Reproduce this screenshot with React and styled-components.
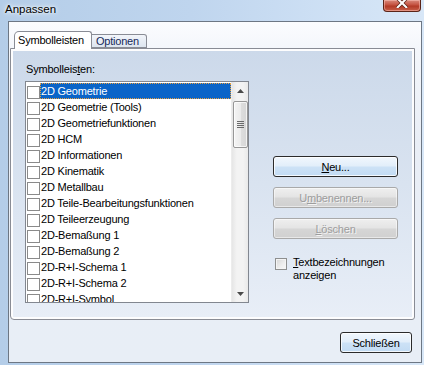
import React from 'react';
import styled, { createGlobalStyle } from 'styled-components';

const Global = createGlobalStyle`
  html, body { margin: 0; padding: 0; }
  body { font-family: "Liberation Sans", Arial, sans-serif; }
  * { box-sizing: border-box; }
`;

const items = [
  '2D Geometrie',
  '2D Geometrie (Tools)',
  '2D Geometriefunktionen',
  '2D HCM',
  '2D Informationen',
  '2D Kinematik',
  '2D Metallbau',
  '2D Teile-Bearbeitungsfunktionen',
  '2D Teileerzeugung',
  '2D-Bemaßung 1',
  '2D-Bemaßung 2',
  '2D-R+I-Schema 1',
  '2D-R+I-Schema 2',
  '2D-R+I-Symbol',
];

const Window = styled.div`
  width: 424px;
  height: 365px;
  display: flex;
  flex-direction: column;
  overflow: hidden;
  background: linear-gradient(90deg, #b4cde8 0%, #bfd5ee 45%, #cfe1f5 80%, #d8e7f7 100%);
  font-family: "Liberation Sans", Arial, sans-serif;
`;

const TitleBar = styled.div`
  height: 21px;
  display: flex;
  justify-content: space-between;
  align-items: flex-start;
  padding: 0 3px 0 5px;
`;

const Title = styled.div`
  font-size: 11.5px;
  line-height: 13px;
  margin-top: 3px;
  color: #000;
  text-shadow: 0 0 6px #fff, 0 0 3px #fff;
`;

const CloseButton = styled.div`
  width: 38px;
  height: 12px;
  border: 1px solid #5b2418;
  border-top: none;
  border-radius: 0 0 4px 4px;
  background: linear-gradient(#d98a7c, #c4513f 45%, #b23a26 55%, #c8604a);
  box-shadow: inset 0 0 0 1px rgba(255, 200, 190, 0.5);
  display: flex;
  justify-content: center;
  align-items: flex-start;
`;

const Body = styled.div`
  flex: 1;
  display: flex;
  padding: 0 2px 2px 8px;
`;

const Client = styled.div`
  flex: 1;
  display: flex;
  flex-direction: column;
  border: 1px solid #6d7784;
  background: linear-gradient(#fbfcfe 0, #f3f6fb 30px, #e9eef6 120px, #e8eef6 100%);
`;

const TabControl = styled.div`
  margin: 9px 6px 0 1px;
  display: flex;
  flex-direction: column;
`;

const TabStrip = styled.div`
  display: flex;
  align-items: flex-end;
  padding-left: 4px;
  height: 17px;
  position: relative;
  z-index: 1;
`;

const Tab = styled.div`
  font-size: 11px;
  letter-spacing: -0.2px;
  line-height: 13px;
  color: ${p => (p.$active ? '#000' : '#15295a')};
  border: 1px solid #898c95;
  border-bottom: ${p => (p.$active ? 'none' : '1px solid #898c95')};
  border-left: ${p => (p.$first ? '1px solid #898c95' : 'none')};
  border-radius: ${p => (p.$active ? '5px 3px 0 0' : '0 3px 0 0')};
  height: ${p => (p.$active ? '18px' : '14px')};
  margin-bottom: ${p => (p.$active ? '-1px' : '0')};
  padding: ${p => (p.$active ? '2px 7px 0 3px' : '0 7px 0 4px')};
  background: ${p => (p.$active ? '#fff' : 'linear-gradient(#f2f5fa, #dde5ef)')};
`;

const Panel = styled.div`
  height: 272px;
  border: 1px solid #898c95;
  border-radius: 0 0 3px 4px;
  background: #fdfdfe;
  padding: 2px;
  display: flex;
`;

const PanelInner = styled.div`
  flex: 1;
  display: flex;
  padding: 12px 0 0 12px;
  background: linear-gradient(#ccd9ea 0%, #d9e3f0 50%, #e8eef7 100%);
`;

const LeftCol = styled.div`
  display: flex;
  flex-direction: column;
`;

const Label = styled.div`
  font-size: 11px;
  letter-spacing: -0.2px;
  line-height: 13px;
  color: #000;
  margin-bottom: 5px;
  padding-left: 1px;
`;

const ListBox = styled.div`
  width: 224px;
  height: 222px;
  border: 1px solid #828790;
  background: #fff;
  display: flex;
  overflow: hidden;
`;

const Rows = styled.div`
  flex: 1;
  padding-top: 1px;
`;

const Row = styled.div`
  height: 16px;
  display: flex;
  align-items: center;
  font-size: 11px;
  letter-spacing: -0.2px;
  white-space: nowrap;
`;

const Box = styled.span`
  width: 13px;
  height: 13px;
  margin: 2px 0 0 1px;
  flex: none;
  border: 1px solid #8a8a8a;
  background: #fff;
`;

const RowText = styled.span`
  flex: 1;
  height: 16px;
  line-height: 16px;
  padding-left: 1px;
  color: ${p => (p.$selected ? '#fff' : '#000')};
  background: ${p => (p.$selected ? '#0a64c8' : 'transparent')};
  outline: ${p => (p.$selected ? '1px dotted #e8a040' : 'none')};
  outline-offset: -1px;
`;

const ScrollBar = styled.div`
  width: 17px;
  flex: none;
  display: flex;
  flex-direction: column;
  align-items: center;
  background: linear-gradient(90deg, #e6e6e6, #f3f3f3 30%, #f3f3f3 70%, #e9e9e9);
  border-left: 1px solid #ececec;
`;

const Arrow = styled.div`
  height: 17px;
  width: 100%;
  display: flex;
  align-items: center;
  justify-content: center;
`;

const Thumb = styled.div`
  width: 15px;
  height: 47px;
  margin-top: 2px;
  border: 1px solid #979797;
  border-radius: 2px;
  background: linear-gradient(90deg, #f4f4f4, #ebebeb 50%, #dedede 51%, #d6d6d6);
  box-shadow: inset 0 0 0 1px rgba(255, 255, 255, 0.7);
  display: flex;
  align-items: center;
  justify-content: center;
`;

const Spacer = styled.div`
  flex: 1;
`;

const RightCol = styled.div`
  display: flex;
  flex-direction: column;
  margin-left: 24px;
  padding-top: 93px;
  width: 125px;
`;

const Button = styled.div`
  height: 21px;
  width: ${p => p.$w || '125px'};
  display: flex;
  align-items: center;
  justify-content: center;
  font-size: 11px;
  letter-spacing: -0.2px;
  border-radius: 3px;
  margin-bottom: ${p => p.$mb || '0'};
  color: ${p => (p.$disabled ? '#9d9d9d' : '#000')};
  border: 1px solid ${p => (p.$disabled ? '#a9a9a9' : '#2b2b2b')};
  background: ${p =>
    p.$disabled
      ? 'linear-gradient(#efefef, #e4e4e4 48%, #d6d6d6 52%, #d0d0d0)'
      : 'linear-gradient(#f1f7fd, #e2eefa 48%, #cde2f6 52%, #c2dbf3)'};
  box-shadow: inset 0 0 0 1px ${p => (p.$disabled ? 'rgba(255,255,255,0.5)' : 'rgba(255,255,255,0.8)')};
  text-shadow: ${p => (p.$disabled ? '1px 1px 0 #f4f4f4' : 'none')};
`;

const U = styled.span`
  text-decoration: underline;
  text-underline-offset: 1px;
`;

const CheckRow = styled.div`
  display: flex;
  align-items: flex-start;
  margin-top: 17px;
  margin-left: 2px;
`;

const BigBox = styled.span`
  width: 12px;
  height: 12px;
  margin-top: 2px;
  flex: none;
  border: 1px solid #8e8f8f;
  background: linear-gradient(135deg, #d6d6d6, #eeeeee 60%, #f8f8f8);
  box-shadow: inset 0 0 0 1px #f4f4f4;
`;

const CheckLabel = styled.div`
  font-size: 11px;
  letter-spacing: -0.2px;
  line-height: 13px;
  margin-left: 6px;
  color: #000;
`;

const Footer = styled.div`
  display: flex;
  justify-content: flex-end;
  padding: 12px 9px 0 0;
`;

export default function App() {
  return (
    <Window>
      <Global />
      <TitleBar>
        <Title>Anpassen</Title>
        <CloseButton>
          <svg width="12" height="8" viewBox="0 0 12 8">
            <path d="M1 -2 L6 3 L11 -2 M1 8 L6 3 L11 8" stroke="#5b2418" strokeWidth="3.4" fill="none" />
            <path d="M1 -2 L6 3 L11 -2 M1 8 L6 3 L11 8" stroke="#fff" strokeWidth="2" fill="none" />
          </svg>
        </CloseButton>
      </TitleBar>
      <Body>
        <Client>
          <TabControl>
            <TabStrip>
              <Tab $active $first>Symbolleisten</Tab>
              <Tab>Optionen</Tab>
            </TabStrip>
            <Panel>
              <PanelInner>
                <LeftCol>
                  <Label>
                    Symbolleis<U>t</U>en:
                  </Label>
                  <ListBox>
                    <Rows>
                      {items.map((t, i) => (
                        <Row key={t}>
                          <Box />
                          <RowText $selected={i === 0}>{t}</RowText>
                        </Row>
                      ))}
                    </Rows>
                    <ScrollBar>
                      <Arrow>
                        <svg width="7" height="4" viewBox="0 0 7 4">
                          <path d="M0 4 L3.5 0 L7 4 Z" fill="#4a4a4a" />
                        </svg>
                      </Arrow>
                      <Thumb>
                        <svg width="7" height="7" viewBox="0 0 7 7">
                          <path d="M0 0.5 H7 M0 2.5 H7 M0 4.5 H7 M0 6.5 H7" stroke="#6a6a6a" strokeWidth="1" />
                        </svg>
                      </Thumb>
                      <Spacer />
                      <Arrow>
                        <svg width="7" height="4" viewBox="0 0 7 4">
                          <path d="M0 0 L3.5 4 L7 0 Z" fill="#4a4a4a" />
                        </svg>
                      </Arrow>
                    </ScrollBar>
                  </ListBox>
                </LeftCol>
                <RightCol>
                  <Button $mb="10px">
                    <U>N</U>eu...
                  </Button>
                  <Button $disabled $mb="10px">
                    U<U>m</U>benennen...
                  </Button>
                  <Button $disabled>
                    <U>L</U>öschen
                  </Button>
                  <CheckRow>
                    <BigBox />
                    <CheckLabel>
                      <U>T</U>extbezeichnungen
                      <br />
                      anzeigen
                    </CheckLabel>
                  </CheckRow>
                </RightCol>
              </PanelInner>
            </Panel>
          </TabControl>
          <Footer>
            <Button $w="72px">Schließen</Button>
          </Footer>
        </Client>
      </Body>
    </Window>
  );
}
